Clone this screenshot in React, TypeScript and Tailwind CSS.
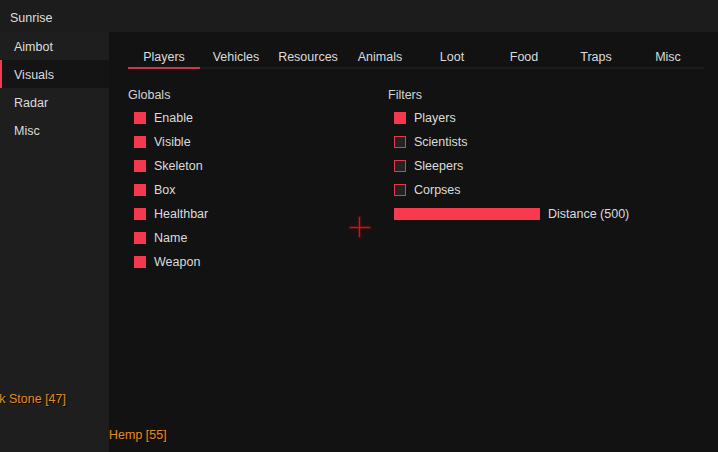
import React from "react";

const font = { fontFamily: '"Liberation Sans", Arial, sans-serif' };

function Check({ on, label }: { on: boolean; label: string }) {
  return (
    <div className="flex h-[24px] items-center pl-[6px]">
      {on ? (
        <div className="h-[12px] w-[12px] bg-[#f5394d]" />
      ) : (
        <div className="h-[12px] w-[12px] border border-[#e53a4e] bg-[#222222]" />
      )}
      <span className="ml-[8px] text-[#dcdcdc]">{label}</span>
    </div>
  );
}

export default function App() {
  const tabs = ["Players", "Vehicles", "Resources", "Animals", "Loot", "Food", "Traps", "Misc"];
  const side = ["Aimbot", "Visuals", "Radar", "Misc"];
  const globals = ["Enable", "Visible", "Skeleton", "Box", "Healthbar", "Name", "Weapon"];
  return (
    <div
      className="relative flex h-[452px] w-[718px] flex-col overflow-hidden bg-[#1c1c1c] text-[12.5px] leading-[16px] text-[#dcdcdc]"
      style={font}
    >
      <div className="flex h-[32px] shrink-0 items-center bg-[#1c1c1c] pl-[10px] pt-[3px] text-[#dedede]">Sunrise</div>
      <div className="flex flex-1">
        <div className="w-[109px] shrink-0 bg-[#1e1e1e]">
          {side.map((s) =>
            s === "Visuals" ? (
              <div key={s} className="flex h-[28px] items-center border-l-2 border-[#f5394d] bg-[#141414] pl-[12px] pt-[1px]">
                {s}
              </div>
            ) : (
              <div key={s} className="flex h-[28px] items-center pl-[14px] pt-[1px]">
                {s}
              </div>
            )
          )}
        </div>
        <div className="flex-1 bg-[#121212] pl-[19px] pt-[12px]">
          <div className="flex">
            {tabs.map((t) => (
              <div
                key={t}
                className={
                  "flex h-[25px] w-[72px] items-center justify-center border-b-2 pt-[2px] " +
                  (t === "Players" ? "border-[#c8374a]" : "border-[#1c1c1c]")
                }
              >
                {t}
              </div>
            ))}
          </div>
          <div className="mt-[18px] flex">
            <div className="w-[260px]">
              <div className="h-[19px] text-[#d4d4d4]">Globals</div>
              {globals.map((g) => (
                <Check key={g} on label={g} />
              ))}
            </div>
            <div>
              <div className="h-[19px] text-[#d4d4d4]">Filters</div>
              <Check on label="Players" />
              <Check on={false} label="Scientists" />
              <Check on={false} label="Sleepers" />
              <Check on={false} label="Corpses" />
              <div className="flex h-[24px] items-center pl-[6px]">
                <div className="h-[12px] w-[146px] bg-[#f83a4f]" />
                <span className="ml-[8px]">Distance (500)</span>
              </div>
            </div>
          </div>
        </div>
      </div>

      {/* crosshair overlay */}
      <div className="absolute left-[350px] top-[217px] h-[20px] w-[20px]">
        <div className="absolute left-0 top-[10px] h-[1px] w-[20px] bg-[#e01010] shadow-[0_0_2px_1px_rgba(200,0,0,0.45)]" />
        <div className="absolute left-[9px] top-0 h-[20px] w-[1px] bg-[#e01010] shadow-[0_0_2px_1px_rgba(200,0,0,0.45)]" />
      </div>

      {/* ESP labels */}
      <div
        className="absolute right-[652px] top-[391px] whitespace-nowrap text-[#e38a22]"
        style={{ textShadow: "1px 1px 0 #000, -1px 0 0 #3a2000" }}
      >
        Rock Stone [47]
      </div>
      <div
        className="absolute left-[109px] top-[427px] whitespace-nowrap text-[#e38a22]"
        style={{ textShadow: "1px 1px 0 #000, -1px 0 0 #3a2000" }}
      >
        Hemp [55]
      </div>
    </div>
  );
}
